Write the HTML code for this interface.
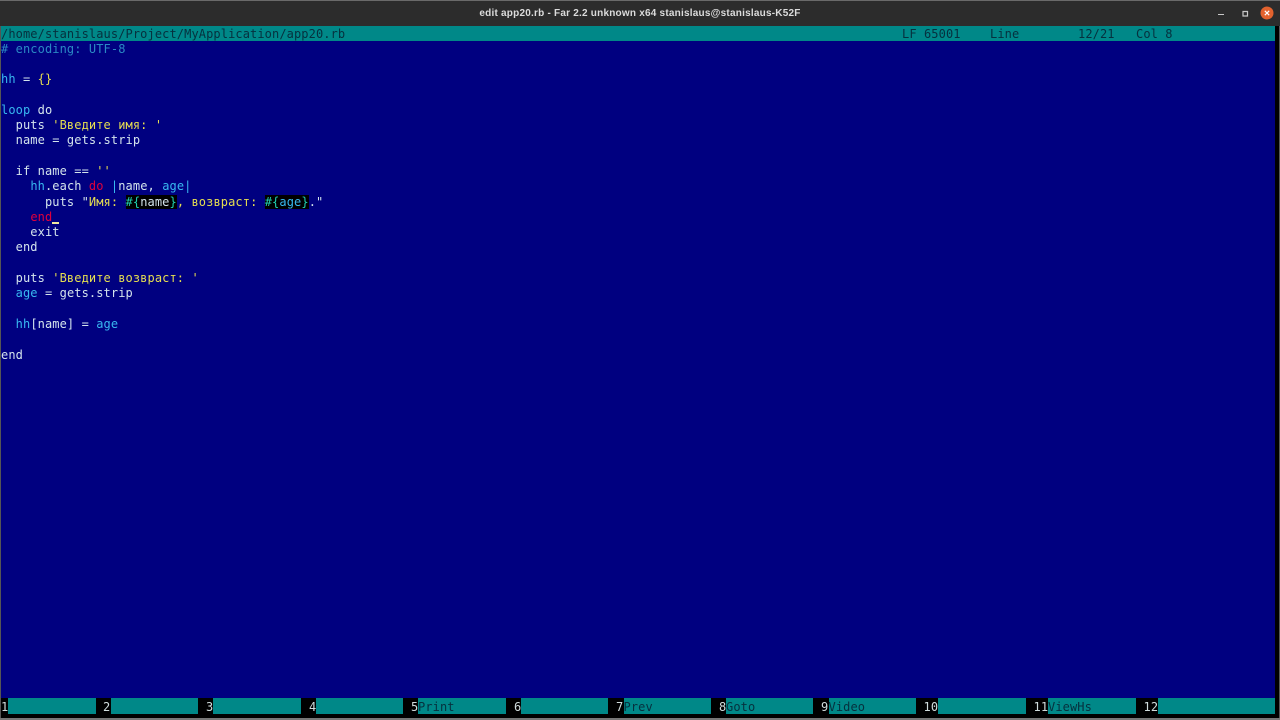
<!DOCTYPE html>
<html><head><meta charset="utf-8"><style>
html,body{margin:0;padding:0;width:1280px;height:720px;overflow:hidden;background:#000}
#tb{position:absolute;left:0;top:0;width:1280px;height:26px;background:#2c2c2c;border-top:1px solid #6a6a6a;box-sizing:border-box}
#title{position:absolute;left:0;top:7px;width:1280px;text-align:center;font:bold 10px/13px "Liberation Sans",sans-serif;color:#dcdcdc;letter-spacing:.22px;filter:blur(.25px)}
#blue{position:absolute;left:1px;top:40px;width:1274px;height:658px;background:#000080}
#st{position:absolute;left:1px;top:26px;width:1274px;height:14.5px;background:#008888}
.t{position:absolute;font:12px/15.3px "DejaVu Sans Mono","Liberation Mono",monospace;letter-spacing:.1px;white-space:pre;filter:blur(.3px)}
#st .t{top:.6px;color:#06303e}
#code{left:1px;top:41.6px;color:#d4e4ec}
.c{color:#38b8f0}.y{color:#e6de50}.r{color:#e0003c}.m{color:#2a88c4}.g{color:#20d0b0}
.k{background:#000}
#cur{position:absolute;left:52px;top:222px;width:7px;height:2px;background:#f0e8a0}
.b{position:absolute;top:698px;height:16px;background:#008888}
.f{position:absolute;top:699.8px;color:#d0dcdc}
.l{position:absolute;top:699.8px;color:#06303e}
.edge{position:absolute;background:#555}
</style></head><body>
<div id="tb"></div>
<div id="title">edit app20.rb - Far 2.2 unknown x64 stanislaus@stanislaus-K52F</div>
<svg style="position:absolute;left:1210px;top:3px" width="70" height="22" viewBox="0 0 70 22">
<path d="M8 11.5H14" stroke="#c8c8c8" stroke-width="1"/>
<path d="M33 8.5h4.5v4.5h-4.5z" fill="none" stroke="#c8c8c8" stroke-width="1.2"/>
<circle cx="57" cy="10" r="6.5" fill="#e2622e"/>
<path d="M54.8 7.8l4.4 4.4M59.2 7.8l-4.4 4.4" stroke="#fff" stroke-width="1.2"/>
</svg>
<div id="blue"></div>
<div id="st">
<div class="t" style="left:0">/home/stanislaus/Project/MyApplication/app20.rb</div>
<div class="t" style="left:901px">LF 65001</div>
<div class="t" style="left:989px">Line</div>
<div class="t" style="left:1077px">12/21</div>
<div class="t" style="left:1135px">Col 8</div>
</div>
<div id="code" class="t"><span class="m"># encoding: UTF-8</span>

<span class="c">hh</span> = <span class="y">{}</span>

<span class="c">loop</span> do
  puts <span class="y">'Введите имя: '</span>
  name = gets.strip

  if name == <span class="y">''</span>
    <span class="c">hh</span>.each <span class="r">do</span> <span class="c">|</span>name, <span class="c">age|</span>
      puts "<span class="y">Имя: </span><span class="k g">#{</span><span class="k">name</span><span class="k g">}</span><span class="y">, возвраст: </span><span class="k g">#{</span><span class="k c">age</span><span class="k g">}</span>."
    <span class="r">end</span>
    exit
  end

  puts <span class="y">'Введите возвраст: '</span>
  <span class="c">age</span> = gets.strip

  <span class="c">hh</span>[name] = <span class="c">age</span>

end</div>
<div id="cur"></div>

<div class="b" style="left:8px;width:88px"></div>
<div class="b" style="left:110.5px;width:87.5px"></div>
<div class="b" style="left:213px;width:88px"></div>
<div class="b" style="left:316px;width:87px"></div>
<div class="b" style="left:418px;width:88px"></div>
<div class="b" style="left:521px;width:87px"></div>
<div class="b" style="left:623.5px;width:87.5px"></div>
<div class="b" style="left:726px;width:87px"></div>
<div class="b" style="left:828.5px;width:87.5px"></div>
<div class="b" style="left:938px;width:88px"></div>
<div class="b" style="left:1048px;width:88px"></div>
<div class="b" style="left:1158px;width:117px"></div>

<div class="t f" style="left:1px">1</div>
<div class="t f" style="left:103px">2</div>
<div class="t f" style="left:206px">3</div>
<div class="t f" style="left:309px">4</div>
<div class="t f" style="left:411px">5</div>
<div class="t f" style="left:514px">6</div>
<div class="t f" style="left:616px">7</div>
<div class="t f" style="left:719px">8</div>
<div class="t f" style="left:821px">9</div>
<div class="t f" style="left:923.5px">10</div>
<div class="t f" style="left:1033.5px">11</div>
<div class="t f" style="left:1143.5px">12</div>
<div class="t l" style="left:418px">Print</div>
<div class="t l" style="left:623.5px">Prev</div>
<div class="t l" style="left:726px">Goto</div>
<div class="t l" style="left:828.5px">Video</div>
<div class="t l" style="left:1048px">ViewHs</div>

<div class="edge" style="left:0;top:26px;width:1px;height:694px"></div>
<div class="edge" style="left:1279px;top:26px;width:1px;height:694px"></div>
<div class="edge" style="left:0;top:718px;width:1280px;height:2px;background:#777"></div>
</body></html>
